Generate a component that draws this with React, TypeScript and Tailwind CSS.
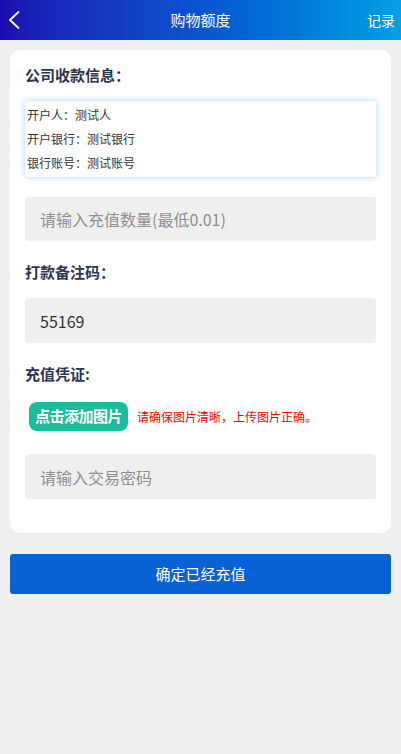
import React from 'react';

const font = { fontFamily: '"Noto Sans CJK SC", "Noto Sans", sans-serif' };

const App: React.FC = () => {
  return (
    <div className="min-h-[754px] bg-[#efefef] text-[#333]" style={font}>
      {/* Header */}
      <header className="h-10 bg-gradient-to-r from-[#1a0db2] via-[#0b53cf] to-[#05a0e3] flex items-center justify-between text-white relative">
        <button className="w-10 h-10 flex items-center pl-2">
          <svg width="12" height="18" viewBox="0 0 12 18" fill="none">
            <path d="M10.5 1 L2 9 L10.5 17" stroke="#fff" strokeWidth="1.8" strokeLinecap="round" strokeLinejoin="round" />
          </svg>
        </button>
        <h1 className="absolute left-1/2 -translate-x-1/2 text-[15px]">购物额度</h1>
        <span className="text-[14px] pr-[6px]">记录</span>
      </header>

      {/* Card */}
      <div className="px-[10px] pt-[10px]">
        <div className="bg-white rounded-[10px] px-[15px] pt-[14px] pb-[34px]">
          <h2 className="text-[15px] font-bold text-[#2c3550] leading-[22px]">公司收款信息：</h2>
          <div className="mt-[15px] rounded-[2px] shadow-[0_0_6px_rgba(64,160,255,0.45)] py-[2px] pl-[2px] text-[12px] leading-[24px] text-[#333]">
            <p>开户人：测试人</p>
            <p>开户银行：测试银行</p>
            <p>银行账号：测试账号</p>
          </div>

          <div className="mt-[20px] h-[44px] bg-[#efefef] rounded-[4px] flex items-center px-[15px] text-[16px] text-[#8f8f8f]">
            请输入充值数量(最低0.01)
          </div>

          <h2 className="mt-[20px] text-[15px] font-bold text-[#2c3550] leading-[22px]">打款备注码：</h2>
          <div className="mt-[15px] h-[45px] bg-[#efefef] rounded-[4px] flex items-center px-[15px] text-[16px] text-[#333]">
            55169
          </div>

          <h2 className="mt-[20px] text-[15px] font-bold text-[#2c3550] leading-[22px]">充值凭证:</h2>
          <div className="mt-[17px] flex items-center pl-[4px]">
            <button className="h-[29px] px-[6px] rounded-[8px] bg-[#1bbc9b] text-white text-[15px] font-bold tracking-[-0.5px]">
              点击添加图片
            </button>
            <span className="ml-[9px] text-[12px] text-[#ff0000]">请确保图片清晰，上传图片正确。</span>
          </div>

          <div className="mt-[23px] h-[45px] bg-[#efefef] rounded-[4px] flex items-center px-[15px] text-[16px] text-[#8f8f8f]">
            请输入交易密码
          </div>
        </div>

        <button className="mt-[21px] w-full h-[40px] bg-[#0962d4] rounded-[3px] text-white text-[15px]">
          确定已经充值
        </button>
      </div>
    </div>
  );
};

export default App;
